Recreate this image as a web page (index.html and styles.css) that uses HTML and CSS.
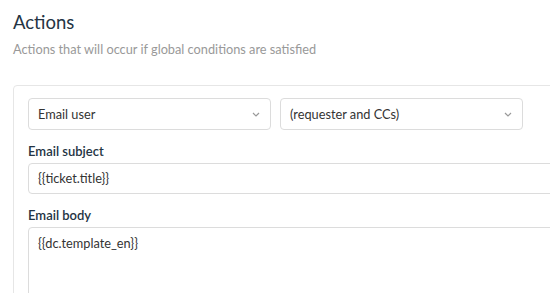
FILE: index.html
```html
<!DOCTYPE html>
<html lang="en">
<head>
  <meta charset="UTF-8" />
  <title>Actions</title>
  <link rel="stylesheet" href="styles.css">
</head>
<body>
  <div class="page">
    <h2 class="title">Actions</h2>
    <p class="subtitle">Actions that will occur if global conditions are satisfied</p>

    <div class="card">
      <div class="row">
        <div class="select">
          <span>Email user</span>
          <svg class="chevron" width="8" height="5" viewBox="0 0 8 5"><path d="M1 1l3 3 3-3" fill="none" stroke="#999" stroke-width="1.2"/></svg>
        </div>
        <div class="select">
          <span>(requester and CCs)</span>
          <svg class="chevron" width="8" height="5" viewBox="0 0 8 5"><path d="M1 1l3 3 3-3" fill="none" stroke="#999" stroke-width="1.2"/></svg>
        </div>
      </div>

      <label class="label">Email subject</label>
      <div class="input">{{ticket.title}}</div>

      <label class="label">Email body</label>
      <div class="input textarea">{{dc.template_en}}</div>
    </div>
  </div>
</body>
</html>
```

FILE: styles.css
```css
html, body {
  overflow: hidden;
}
body {
  margin: 0;
  background-color: #fff;
  font-family: 'Lato', 'Open Sans', sans-serif;
  color: #333;
}
.page {
  padding: 8px 0 0 13px;
}
.title {
  margin: 0;
  font-size: 18.5px;
  font-weight: normal;
  line-height: 28px;
  color: #243444;
}
.subtitle {
  margin: 4px 0 0;
  font-size: 12.75px;
  line-height: 18px;
  color: #999;
}
.card {
  margin-top: 27px;
  width: 600px;
  border: 1px solid #e6e6e6;
  border-radius: 4px;
  padding: 12px 14px 20px;
  background-color: #fff;
}
.row {
  display: flex;
  gap: 9px;
  margin-bottom: 3px;
}
.select {
  width: 243px;
  height: 32px;
  box-sizing: border-box;
  border: 1px solid #dcdcdc;
  border-radius: 4px;
  display: flex;
  align-items: center;
  justify-content: space-between;
  padding: 0 10px 0 9px;
  font-size: 12.75px;
}
.label {
  display: block;
  margin: 12px 0 3px;
  font-size: 13px;
  line-height: 18px;
  font-weight: 600;
  color: #243444;
}
.input {
  height: 31px;
  box-sizing: border-box;
  border: 1px solid #dcdcdc;
  border-radius: 4px;
  padding: 6px 9px;
  font-size: 12.75px;
  line-height: 17px;
}
.textarea {
  height: 90px;
  padding-top: 7px;
}
```
